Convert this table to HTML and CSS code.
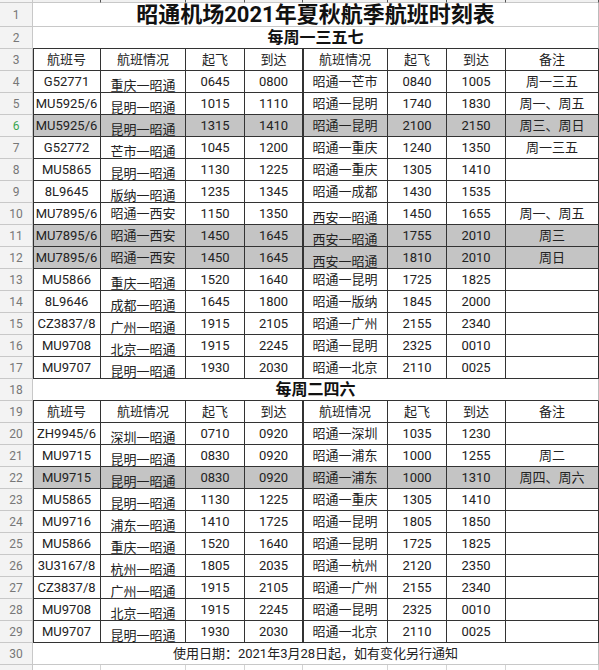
FILE: index.html
```html
<!DOCTYPE html>
<html lang="zh">
<head>
<meta charset="utf-8">
<title>昭通机场2021年夏秋航季航班时刻表</title>
<link rel="stylesheet" href="styles.css">
</head>
<body>
<div class="sheet">
  <div class="row strip"><div class="rh"></div><div class="sc"></div><div class="sc"></div><div class="sc"></div><div class="sc"></div><div class="sc"></div><div class="sc"></div><div class="sc"></div><div class="sc"></div></div>

  <div class="row r-title"><div class="rh">1</div><div class="m title">昭通机场2021年夏秋航季航班时刻表</div></div>
  <div class="row"><div class="rh">2</div><div class="m sub dark-b">每周一三五七</div></div>

  <div class="row"><div class="rh">3</div><div class="c a">航班号</div><div class="c">航班情况</div><div class="c">起飞</div><div class="c">到达</div><div class="c e">航班情况</div><div class="c">起飞</div><div class="c">到达</div><div class="c">备注</div></div>
  <div class="row"><div class="rh">4</div><div class="c a">G52771</div><div class="c low">重庆一昭通</div><div class="c">0645</div><div class="c">0800</div><div class="c e">昭通一芒市</div><div class="c">0840</div><div class="c">1005</div><div class="c">周一三五</div></div>
  <div class="row"><div class="rh">5</div><div class="c a">MU5925/6</div><div class="c low">昆明一昭通</div><div class="c">1015</div><div class="c">1110</div><div class="c e">昭通一昆明</div><div class="c">1740</div><div class="c">1830</div><div class="c">周一、周五</div></div>
  <div class="row hl"><div class="rh sel">6</div><div class="c a">MU5925/6</div><div class="c low">昆明一昭通</div><div class="c">1315</div><div class="c">1410</div><div class="c e">昭通一昆明</div><div class="c">2100</div><div class="c">2150</div><div class="c">周三、周日</div></div>
  <div class="row"><div class="rh">7</div><div class="c a">G52772</div><div class="c low">芒市一昭通</div><div class="c">1045</div><div class="c">1200</div><div class="c e">昭通一重庆</div><div class="c">1240</div><div class="c">1350</div><div class="c">周一三五</div></div>
  <div class="row"><div class="rh">8</div><div class="c a">MU5865</div><div class="c low">昆明一昭通</div><div class="c">1130</div><div class="c">1225</div><div class="c e">昭通一重庆</div><div class="c">1305</div><div class="c">1410</div><div class="c"></div></div>
  <div class="row"><div class="rh">9</div><div class="c a">8L9645</div><div class="c low">版纳一昭通</div><div class="c">1235</div><div class="c">1345</div><div class="c e">昭通一成都</div><div class="c">1430</div><div class="c">1535</div><div class="c"></div></div>
  <div class="row"><div class="rh">10</div><div class="c a">MU7895/6</div><div class="c">昭通一西安</div><div class="c">1150</div><div class="c">1350</div><div class="c e low">西安一昭通</div><div class="c">1450</div><div class="c">1655</div><div class="c">周一、周五</div></div>
  <div class="row hl"><div class="rh">11</div><div class="c a">MU7895/6</div><div class="c">昭通一西安</div><div class="c">1450</div><div class="c">1645</div><div class="c e low">西安一昭通</div><div class="c">1755</div><div class="c">2010</div><div class="c">周三</div></div>
  <div class="row hl"><div class="rh">12</div><div class="c a">MU7895/6</div><div class="c">昭通一西安</div><div class="c">1450</div><div class="c">1645</div><div class="c e low">西安一昭通</div><div class="c">1810</div><div class="c">2010</div><div class="c">周日</div></div>
  <div class="row"><div class="rh">13</div><div class="c a">MU5866</div><div class="c low">重庆一昭通</div><div class="c">1520</div><div class="c">1640</div><div class="c e">昭通一昆明</div><div class="c">1725</div><div class="c">1825</div><div class="c"></div></div>
  <div class="row"><div class="rh">14</div><div class="c a">8L9646</div><div class="c low">成都一昭通</div><div class="c">1645</div><div class="c">1800</div><div class="c e">昭通一版纳</div><div class="c">1845</div><div class="c">2000</div><div class="c"></div></div>
  <div class="row"><div class="rh">15</div><div class="c a">CZ3837/8</div><div class="c low">广州一昭通</div><div class="c">1915</div><div class="c">2105</div><div class="c e">昭通一广州</div><div class="c">2155</div><div class="c">2340</div><div class="c"></div></div>
  <div class="row"><div class="rh">16</div><div class="c a">MU9708</div><div class="c low">北京一昭通</div><div class="c">1915</div><div class="c">2245</div><div class="c e">昭通一昆明</div><div class="c">2325</div><div class="c">0010</div><div class="c"></div></div>
  <div class="row"><div class="rh">17</div><div class="c a">MU9707</div><div class="c low">昆明一昭通</div><div class="c">1930</div><div class="c">2030</div><div class="c e">昭通一北京</div><div class="c">2110</div><div class="c">0025</div><div class="c"></div></div>

  <div class="row"><div class="rh">18</div><div class="m sub dark-b">每周二四六</div></div>

  <div class="row"><div class="rh">19</div><div class="c a">航班号</div><div class="c">航班情况</div><div class="c">起飞</div><div class="c">到达</div><div class="c e">航班情况</div><div class="c">起飞</div><div class="c">到达</div><div class="c">备注</div></div>
  <div class="row"><div class="rh">20</div><div class="c a">ZH9945/6</div><div class="c low">深圳一昭通</div><div class="c">0710</div><div class="c">0920</div><div class="c e">昭通一深圳</div><div class="c">1035</div><div class="c">1230</div><div class="c"></div></div>
  <div class="row"><div class="rh">21</div><div class="c a">MU9715</div><div class="c low">昆明一昭通</div><div class="c">0830</div><div class="c">0920</div><div class="c e">昭通一浦东</div><div class="c">1000</div><div class="c">1255</div><div class="c">周二</div></div>
  <div class="row hl"><div class="rh">22</div><div class="c a">MU9715</div><div class="c low">昆明一昭通</div><div class="c">0830</div><div class="c">0920</div><div class="c e">昭通一浦东</div><div class="c">1000</div><div class="c">1310</div><div class="c">周四、周六</div></div>
  <div class="row"><div class="rh">23</div><div class="c a">MU5865</div><div class="c low">昆明一昭通</div><div class="c">1130</div><div class="c">1225</div><div class="c e">昭通一重庆</div><div class="c">1305</div><div class="c">1410</div><div class="c"></div></div>
  <div class="row"><div class="rh">24</div><div class="c a">MU9716</div><div class="c low">浦东一昭通</div><div class="c">1410</div><div class="c">1725</div><div class="c e">昭通一昆明</div><div class="c">1805</div><div class="c">1850</div><div class="c"></div></div>
  <div class="row"><div class="rh">25</div><div class="c a">MU5866</div><div class="c low">重庆一昭通</div><div class="c">1520</div><div class="c">1640</div><div class="c e">昭通一昆明</div><div class="c">1725</div><div class="c">1825</div><div class="c"></div></div>
  <div class="row"><div class="rh">26</div><div class="c a">3U3167/8</div><div class="c low">杭州一昭通</div><div class="c">1805</div><div class="c">2035</div><div class="c e">昭通一杭州</div><div class="c">2120</div><div class="c">2350</div><div class="c"></div></div>
  <div class="row"><div class="rh">27</div><div class="c a">CZ3837/8</div><div class="c low">广州一昭通</div><div class="c">1915</div><div class="c">2105</div><div class="c e">昭通一广州</div><div class="c">2155</div><div class="c">2340</div><div class="c"></div></div>
  <div class="row"><div class="rh">28</div><div class="c a">MU9708</div><div class="c low">北京一昭通</div><div class="c">1915</div><div class="c">2245</div><div class="c e">昭通一昆明</div><div class="c">2325</div><div class="c">0010</div><div class="c"></div></div>
  <div class="row"><div class="rh">29</div><div class="c a">MU9707</div><div class="c low">昆明一昭通</div><div class="c">1930</div><div class="c">2030</div><div class="c e">昭通一北京</div><div class="c">2110</div><div class="c">0025</div><div class="c"></div></div>

  <div class="row"><div class="rh">30</div><div class="m note">使用日期：2021年3月28日起，如有变化另行通知</div></div>
  <div class="row"><div class="rh"></div><div class="ec"></div><div class="ec"></div><div class="ec"></div><div class="ec"></div><div class="ec"></div><div class="ec"></div><div class="ec"></div><div class="ec"></div></div>
</div>
</body>
</html>
```

FILE: styles.css
```css
html, body {
  margin: 0;
  padding: 0;
  background: #ffffff;
}

body {
  font-family: Roboto, "Noto Sans CJK SC", "Noto Sans", sans-serif;
  color: #222;
  width: 599px;
  height: 670px;
  overflow: hidden;
}

.sheet {
  display: flex;
  flex-direction: column;
}

.row {
  display: grid;
  grid-template-columns: 33px 68px 85px 59px 58px 85px 59px 59px 93px;
  height: 22px;
  flex: none;
}

.row > div {
  box-sizing: border-box;
  min-width: 0;
}

.strip {
  height: 3px;
}

.sc {
  background: #f1f1f1;
  border-right: 1px solid #555;
  border-bottom: 1px solid #c8c8c8;
}

.r-title {
  height: 24px;
}

.rh {
  background: #f3f3f3;
  border-right: 1px solid #c8c8c8;
  border-bottom: 1px solid #c8c8c8;
  color: #777;
  font-size: 12px;
  display: flex;
  align-items: center;
  justify-content: center;
}

.rh.sel {
  color: #3aa651;
}

.c {
  border-right: 1px solid #333;
  border-bottom: 1px solid #333;
  display: flex;
  align-items: center;
  justify-content: center;
  font-size: 13px;
  line-height: 1;
  white-space: nowrap;
  overflow: hidden;
  color: #222;
}

.c.a {
  box-shadow: inset 1px 0 0 #333;
}

.c.e {
  box-shadow: inset 1px 0 0 #333;
}

.c.low {
  align-items: flex-end;
}

.hl .c {
  background: #c4c4c4;
}

.m {
  grid-column: 2 / -1;
  display: flex;
  align-items: center;
  justify-content: center;
  border-right: 1px solid #bbb;
  border-bottom: 1px solid #c8c8c8;
  white-space: nowrap;
}

.m.dark-b {
  border-bottom-color: #333;
}

.title {
  font-size: 22px;
  line-height: 22px;
  font-weight: 700;
  color: #111;
  padding-top: 1px;
}

.sub {
  font-size: 16px;
  line-height: 1;
  font-weight: 700;
  color: #111;
}

.note {
  font-size: 13px;
  line-height: 1;
  color: #222;
}

.ec {
  border-right: 1px solid #d4d4d4;
}
```
